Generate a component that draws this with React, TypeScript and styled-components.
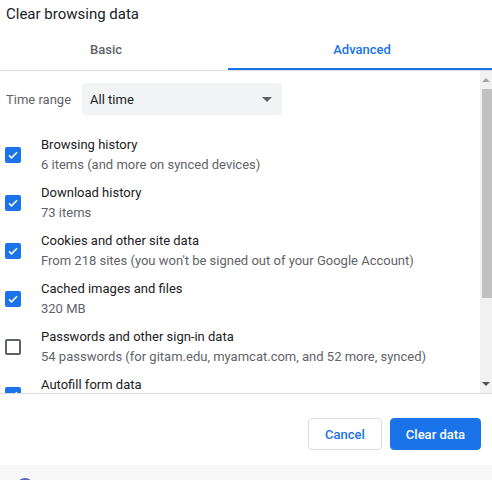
import styled, { createGlobalStyle } from "styled-components";

const GlobalStyle = createGlobalStyle`
  html, body {
    margin: 0;
    padding: 0;
    background: #ffffff;
  }
  body {
    font-family: Roboto, "Noto Sans", "Liberation Sans", sans-serif;
    -webkit-font-smoothing: antialiased;
  }
`;

const Page = styled.div`
  width: 492px;
  height: 480px;
  overflow: hidden;
  display: flex;
  flex-direction: column;
  background: #ffffff;

  & > * {
    flex-shrink: 0;
  }
`;

const Title = styled.h1`
  margin: 0;
  padding: 6px 6px 6px 6px;
  font-size: 15px;
  line-height: 16px;
  font-weight: 400;
  color: #202124;
`;

const Tabs = styled.div`
  display: flex;
  border-bottom: 1px solid #dadce0;
`;

const Tab = styled.div<{ $active?: boolean; $width?: string }>`
  flex: ${(p) => (p.$width ? `0 0 ${p.$width}` : "1")};
  box-sizing: border-box;
  padding: ${(p) => (p.$active ? "2px 0 0 4px" : "2px 16px 0 0")};
  height: 42px;
  display: flex;
  align-items: center;
  justify-content: center;
  font-size: 13px;
  font-weight: 500;
  color: ${(p) => (p.$active ? "#1a73e8" : "#5f6368")};
  border-bottom: 2px solid ${(p) => (p.$active ? "#1a73e8" : "transparent")};
`;

const Body = styled.div`
  height: 322px;
  display: flex;
  border-bottom: 1px solid #dadce0;
`;

const List = styled.div`
  flex: 1;
  overflow: hidden;
  padding: 12px 0 0 5px;
`;

const RangeRow = styled.div`
  display: flex;
  align-items: center;
  gap: 11px;
  padding-left: 1px;
  margin-bottom: 20px;
`;

const Label = styled.span`
  font-size: 13px;
  color: #5f6368;
`;

const Select = styled.div`
  width: 200px;
  height: 32px;
  box-sizing: border-box;
  padding: 0 10px 0 8px;
  border-radius: 4px;
  background: #f1f3f4;
  display: flex;
  align-items: center;
  justify-content: space-between;
  font-size: 13px;
  color: #202124;
`;

const Caret = styled.span`
  width: 0;
  height: 0;
  border-left: 5px solid transparent;
  border-right: 5px solid transparent;
  border-top: 5px solid #5f6368;
`;

const Item = styled.div`
  display: flex;
  align-items: center;
  gap: 20px;
  height: 40px;
  margin-bottom: 8px;
`;

const Box = styled.span<{ $checked?: boolean }>`
  width: 16px;
  height: 16px;
  box-sizing: border-box;
  border-radius: 2px;
  flex-shrink: 0;
  display: flex;
  align-items: center;
  justify-content: center;
  background: ${(p) => (p.$checked ? "#1a73e8" : "#ffffff")};
  border: ${(p) => (p.$checked ? "none" : "2px solid #5f6368")};
`;

const Texts = styled.div`
  display: flex;
  flex-direction: column;
`;

const ItemTitle = styled.span`
  font-size: 13px;
  line-height: 20px;
  color: #202124;
`;

const ItemSub = styled.span`
  font-size: 13px;
  line-height: 20px;
  min-height: 20px;
  color: #5f6368;
`;

const Track = styled.div`
  width: 12px;
  background: #f1f1f1;
  display: flex;
  flex-direction: column;
  align-items: flex-end;
`;

const ArrowUp = styled.div`
  margin: 7px 2px 7px 0;
  width: 0;
  height: 0;
  border-left: 4px solid transparent;
  border-right: 4px solid transparent;
  border-bottom: 4px solid #a3a3a3;
`;

const ArrowDown = styled.div`
  margin: auto 2px 7px 0;
  width: 0;
  height: 0;
  border-left: 4px solid transparent;
  border-right: 4px solid transparent;
  border-top: 4px solid #505050;
`;

const Thumb = styled.div`
  width: 10px;
  height: 209px;
  background: #c1c1c1;
`;

const Footer = styled.div`
  height: 71px;
  display: flex;
  justify-content: flex-end;
  align-items: flex-start;
  gap: 8px;
  padding: 24px 11px 0 0;
  box-sizing: border-box;
`;

const Button = styled.button<{ $primary?: boolean }>`
  height: 32px;
  padding: 0;
  border-radius: 4px;
  font-family: inherit;
  font-size: 13px;
  font-weight: 500;
  cursor: pointer;
  background: ${(p) => (p.$primary ? "#1a73e8" : "#ffffff")};
  color: ${(p) => (p.$primary ? "#ffffff" : "#1a73e8")};
  border: 1px solid ${(p) => (p.$primary ? "#1a73e8" : "#dadce0")};
  width: ${(p) => (p.$primary ? "91px" : "74px")};
`;

const Strip = styled.div`
  flex: 1 1 auto;
  min-height: 0;
  background: #f8f8f8;
  padding: 13px 0 0 16px;
  overflow: hidden;
`;

const Avatar = styled.div`
  width: 18px;
  height: 18px;
  border-radius: 50%;
  background: #5a67c4;
`;

const Check = () => (
  <svg width="12" height="12" viewBox="0 0 24 24">
    <path d="M4 12.5l5 5L20 6.5" fill="none" stroke="#fff" strokeWidth="3.2" />
  </svg>
);

const items = [
  { title: "Browsing history", sub: "6 items (and more on synced devices)", checked: true },
  { title: "Download history", sub: "73 items", checked: true },
  { title: "Cookies and other site data", sub: "From 218 sites (you won't be signed out of your Google Account)", checked: true },
  { title: "Cached images and files", sub: "320 MB", checked: true },
  { title: "Passwords and other sign-in data", sub: "54 passwords (for gitam.edu, myamcat.com, and 52 more, synced)", checked: false },
  { title: "Autofill form data", sub: "", checked: true },
];

export default function App() {
  return (
    <>
      <GlobalStyle />
      <Page>
        <Title>Clear browsing data</Title>
        <Tabs>
          <Tab $width="228px">Basic</Tab>
          <Tab $active>Advanced</Tab>
        </Tabs>
        <Body>
          <List>
            <RangeRow>
              <Label>Time range</Label>
              <Select>
                All time
                <Caret />
              </Select>
            </RangeRow>
            {items.map((it) => (
              <Item key={it.title}>
                <Box $checked={it.checked}>{it.checked && <Check />}</Box>
                <Texts>
                  <ItemTitle>{it.title}</ItemTitle>
                  <ItemSub>{it.sub}</ItemSub>
                </Texts>
              </Item>
            ))}
          </List>
          <Track>
            <ArrowUp />
            <Thumb />
            <ArrowDown />
          </Track>
        </Body>
        <Footer>
          <Button>Cancel</Button>
          <Button $primary>Clear data</Button>
        </Footer>
        <Strip>
          <Avatar />
        </Strip>
      </Page>
    </>
  );
}
